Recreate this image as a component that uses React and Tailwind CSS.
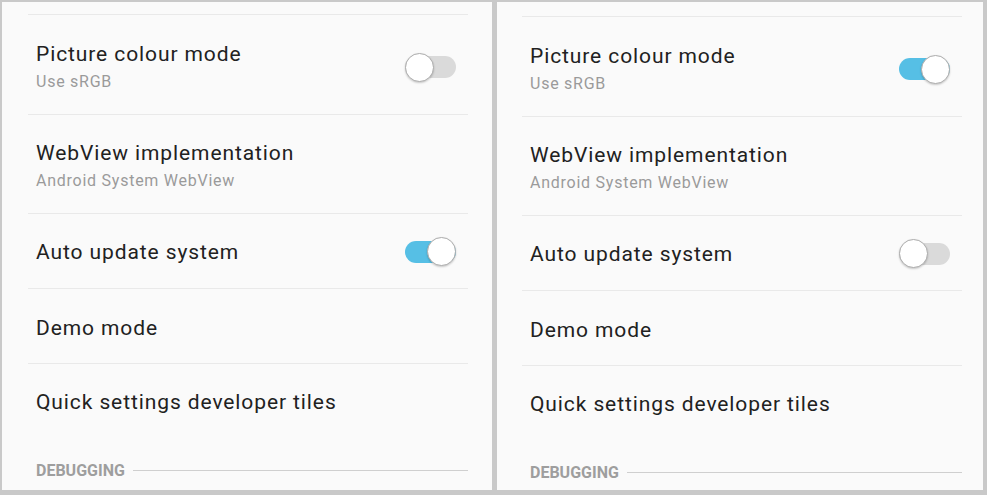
import React from "react";

const font = { fontFamily: "Roboto, 'Noto Sans', sans-serif" };

const Toggle = ({ on }) => {
  return (
    <div className="relative flex items-center h-[29px] w-[51px]">
      <div
        className={`h-[22px] w-full rounded-full ${
          on ? "bg-[#56bfe5]" : "bg-[#dadada]"
        }`}
      />
      <div
        className={`absolute top-0 ${
          on ? "right-0" : "left-0"
        } h-[29px] w-[29px] rounded-full bg-white border border-[#acacac] shadow-[0_1px_2px_rgba(0,0,0,0.2)]`}
      />
    </div>
  );
};

const Row = ({ title, sub, toggle, height, shift }) => {
  return (
    <div
      className={`flex items-center justify-between border-t border-[#e9e9e9] pl-[8px] pr-[12px] ${height} ${shift}`}
    >
      <div className="flex flex-col">
        <span className="text-[21px] leading-[24px] tracking-[0.9px] text-[#212121]">
          {title}
        </span>
        {sub && (
          <span className="text-[16px] leading-[20px] tracking-[0.75px] text-[#9a9a9a] mt-[6px]">
            {sub}
          </span>
        )}
      </div>
      {toggle !== undefined && <Toggle on={toggle} />}
    </div>
  );
};

const Panel = ({ colourOn, autoOn, className }) => {
  return (
    <div className={`bg-[#fafafa] h-full flex flex-col ${className}`}>
      <Row
        title="Picture colour mode"
        sub="Use sRGB"
        toggle={colourOn}
        height="h-[100px]"
        shift="pt-[5px]"
      />
      <Row
        title="WebView implementation"
        sub="Android System WebView"
        height="h-[99px]"
        shift="pt-[4px]"
      />
      <Row title="Auto update system" toggle={autoOn} height="h-[75px]" shift="pt-[1px]" />
      <Row title="Demo mode" height="h-[75px]" shift="pt-[3px]" />
      <Row title="Quick settings developer tiles" height="h-[75px]" shift="pt-[2px]" />
      <div className="flex items-center gap-[8px] pl-[8px] mt-[24px]">
        <span className="text-[16px] leading-[18px] font-bold text-[#9e9e9e]">
          DEBUGGING
        </span>
        <div className="flex-1 h-px bg-[#cfcfcf] -mt-[1px]" />
      </div>
    </div>
  );
};

const App = () => {
  return (
    <div
      style={font}
      className="w-[987px] h-[495px] bg-[#c9c9c9] flex gap-[5px] pl-[2px] pt-[2px] pr-[4px] pb-[5px] overflow-hidden"
    >
      <div className="w-[490px] h-full bg-[#fafafa]">
        <Panel colourOn={false} autoOn={true} className="pt-[12px] pl-[26px] pr-[24px]" />
      </div>
      <div className="flex-1 h-full bg-[#fafafa]">
        <Panel colourOn={true} autoOn={false} className="pt-[14px] pl-[25px] pr-[21px]" />
      </div>
    </div>
  );
};

export default App;
